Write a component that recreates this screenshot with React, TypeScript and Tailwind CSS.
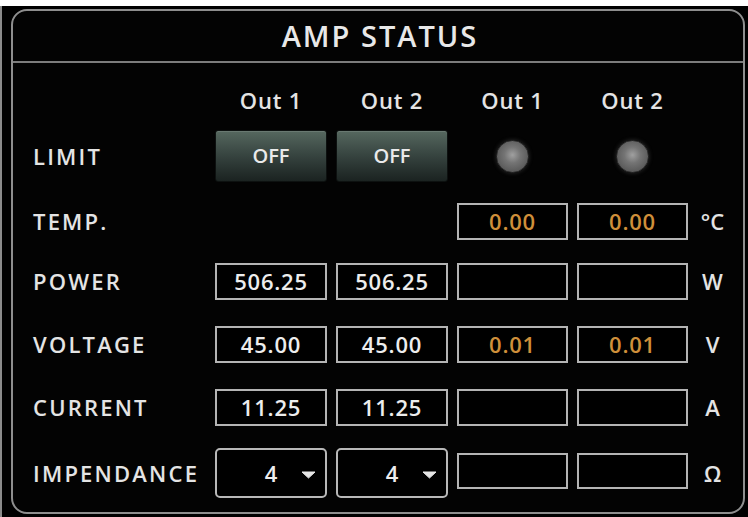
import React from "react";

const font = { fontFamily: '"Open Sans", "Noto Sans", "Liberation Sans", sans-serif' };

const row = "grid grid-cols-[173px_112px_112px_111px_111px_31px] gap-x-[9px] items-center";
const label = "text-[22px] font-semibold tracking-[2.2px] text-[#e4e4e4] whitespace-nowrap";
const unit = "text-[22px] font-semibold text-[#e4e4e4] text-center";

const Box = ({ value, orange, tall }: { value?: string; orange?: boolean; tall?: boolean }) => (
	<div
		className={`${tall ? "self-start mt-[5px] h-[36px]" : "h-[37px]"} border-2 border-[#b4b4b4] bg-black flex items-center justify-center text-[22px] font-semibold tracking-[0.8px] ${
			orange ? "text-[#cf8f3a]" : "text-[#ededed]"
		}`}
	>
		{value}
	</div>
);

const OffButton = () => (
	<div className="h-[52px] rounded-[3px] bg-linear-to-b from-[#56685f] via-[#36433f] to-[#1b2321] border border-[#0d1110] flex items-center justify-center text-[20px] font-semibold text-[#eaeaea] shadow-[inset_0_1px_0_rgba(255,255,255,0.12)]">
		OFF
	</div>
);

const Led = () => (
	<div className="flex justify-center">
		<div className="w-[33px] h-[33px] rounded-full border border-[#2c2c2c] bg-[radial-gradient(circle_at_50%_45%,#a0a0a0_0%,#747474_35%,#585858_75%,#3c3c3c_100%)] shadow-[0_0_4px_rgba(120,120,120,0.35)]" />
	</div>
);

const Dropdown = () => (
	<div className="relative h-[50px] rounded-[5px] border-2 border-[#b8b8b8] bg-black flex items-center justify-center text-[22px] font-semibold text-[#ededed]">
		4
		<svg className="absolute right-[9px] top-[21px]" width="15" height="8" viewBox="0 0 15 8">
			<path d="M1 1h13l-6.5 6z" fill="#e6e6e6" stroke="#e6e6e6" strokeLinejoin="round" />
		</svg>
	</div>
);

const App = () => (
	<div className="w-[748px] h-[517px] bg-white pt-[6px] overflow-hidden" style={font}>
		<div className="h-[511px] bg-black border-l-2 border-[#8a8a8a] pl-[9px] pt-[3px]">
			<div className="w-[734px] h-[505px] rounded-[16px] border-2 border-[#8e8e8e] bg-[#030303]">
				<div className="h-[52px] border-b-2 border-[#7c7c7c] flex items-center justify-center">
					<h1 className="text-[29px] font-semibold tracking-[2px] text-[#e8e8e8] pl-[4px]">AMP STATUS</h1>
				</div>

				<div className="pl-[20px] flex flex-col">
					<div className={`${row} mt-[21px] h-[30px]`}>
						<div />
						{["Out 1", "Out 2", "Out 1", "Out 2"].map((t, i) => (
							<div key={i} className="text-center text-[22px] font-semibold tracking-[0.8px] text-[#e4e4e4]">
								{t}
							</div>
						))}
						<div />
					</div>

					<div className={`${row} mt-[16px] h-[52px]`}>
						<div className={label}>LIMIT</div>
						<OffButton />
						<OffButton />
						<Led />
						<Led />
						<div />
					</div>

					<div className={`${row} mt-[21px] h-[37px]`}>
						<div className={label}>TEMP.</div>
						<div />
						<div />
						<Box value="0.00" orange />
						<Box value="0.00" orange />
						<div className={unit}>°C</div>
					</div>

					<div className={`${row} mt-[23px] h-[37px]`}>
						<div className={label}>POWER</div>
						<Box value="506.25" />
						<Box value="506.25" />
						<Box />
						<Box />
						<div className={unit}>W</div>
					</div>

					<div className={`${row} mt-[26px] h-[37px]`}>
						<div className={label}>VOLTAGE</div>
						<Box value="45.00" />
						<Box value="45.00" />
						<Box value="0.01" orange />
						<Box value="0.01" orange />
						<div className={unit}>V</div>
					</div>

					<div className={`${row} mt-[26px] h-[37px]`}>
						<div className={label}>CURRENT</div>
						<Box value="11.25" />
						<Box value="11.25" />
						<Box />
						<Box />
						<div className={unit}>A</div>
					</div>

					<div className={`${row} mt-[22px] h-[50px]`}>
						<div className={label}>IMPENDANCE</div>
						<Dropdown />
						<Dropdown />
						<Box tall />
						<Box tall />
						<div className={unit}>Ω</div>
					</div>
				</div>
			</div>
		</div>
	</div>
);

export default App;
